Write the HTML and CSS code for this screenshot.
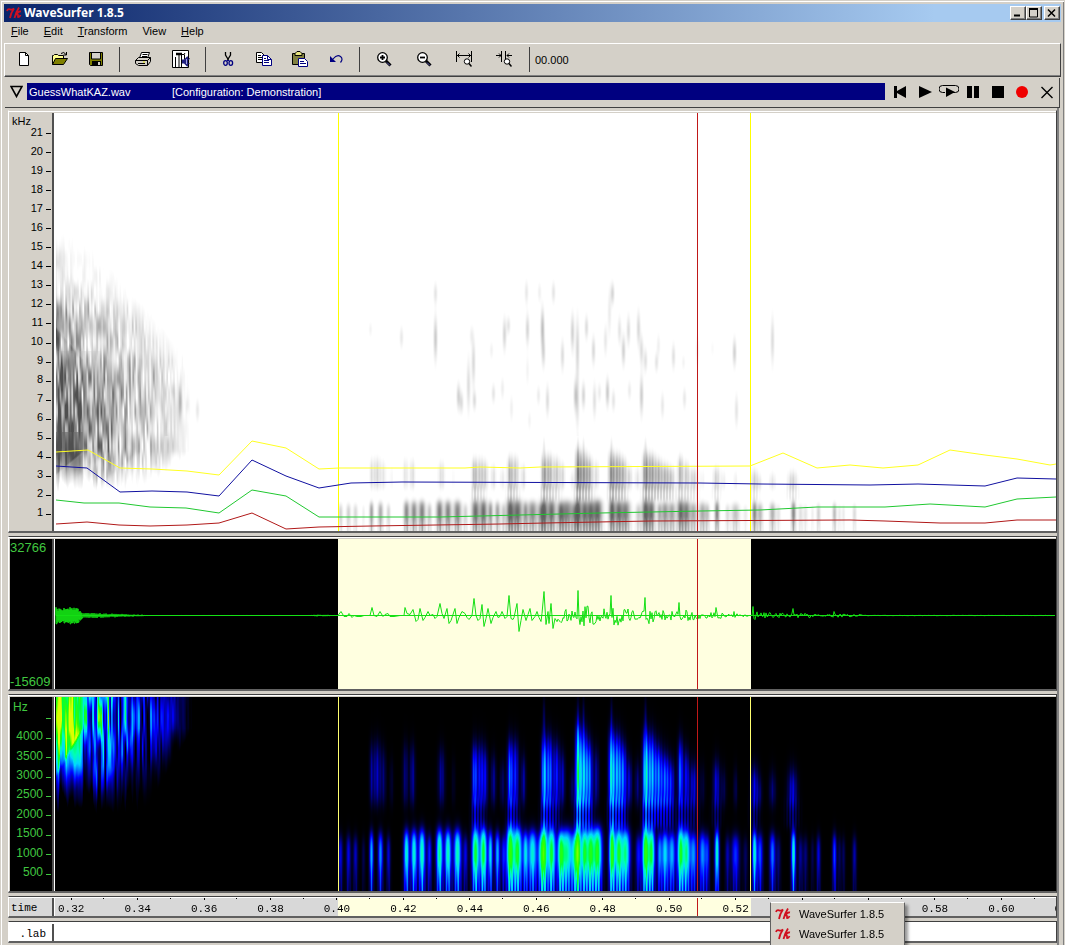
FILE: index.html
```html
<!DOCTYPE html>
<html lang="en">
<head>
<meta charset="utf-8">
<title>WaveSurfer 1.8.5</title>
<link rel="stylesheet" href="styles.css">
</head>
<body>
<svg class="defs" aria-hidden="true">
  <symbol id="tk" viewBox="0 0 16 12"><path d="M1 4Q2 1.500 4 2.300T8 1.500Q5 5.500 4 11M13 .5Q10 5 8.500 11M15 4.500Q12 4 10.500 7.500Q12.500 6.500 12 10Q13.500 10.500 14.500 8" fill="none" stroke="#d01020" stroke-width="1.800"/></symbol>
</svg>
<div class="window">
  <header class="titlebar">
    <svg class="tk"><use href="#tk"/></svg>
    <h1>WaveSurfer 1.8.5</h1>
    <button class="winbtn" aria-label="Minimize"><svg viewBox="0 0 12 10"><path d="M2 7.500h6" stroke="#000" stroke-width="2"/></svg></button>
    <button class="winbtn" aria-label="Maximize"><svg viewBox="0 0 12 10"><path d="M1.500 1v8h8v-8M1 1h9" fill="none" stroke="#000"/><path d="M1 1h9" stroke="#000" stroke-width="2"/></svg></button>
    <button class="winbtn close" aria-label="Close"><svg viewBox="0 0 12 10"><path d="M2 1.500l7 7M9 1.500l-7 7" stroke="#000" stroke-width="1.500"/></svg></button>
  </header>
  <nav class="menubar">
    <button><u>F</u>ile</button><button><u>E</u>dit</button><button><u>T</u>ransform</button><button>View</button><button><u>H</u>elp</button>
  </nav>
  <div class="toolbar">
    <div class="tools">
      <button aria-label="New"><svg viewBox="0 0 16 16"><path d="M3.500 1.500h6l3 3v10h-9z" fill="#fff" stroke="#000"/><path d="M9.500 1.500v3h3" fill="none" stroke="#000"/></svg></button>
      <button aria-label="Open"><svg viewBox="0 0 16 16"><path d="M.5 13.500v-9h1l1-1h3l1 1h5v3" fill="#ffff90" stroke="#000"/><path d="M.5 13.500l3-6h12l-4 6z" fill="#808000" stroke="#000"/><path d="M9 2.500q3-2.500 5 1M14.500 1v3h-3" fill="none" stroke="#000"/></svg></button>
      <button aria-label="Save"><svg viewBox="0 0 16 16"><path d="M1.500 1.500h13v13h-12l-1-1z" fill="#808000" stroke="#000"/><path d="M4 2h8v6h-8z" fill="#d4d0c8"/><path d="M3.500 2v6h9v-6" fill="none" stroke="#000"/><path d="M4 10h9v5h-9z"/><path d="M10 11h2v3h-2z" fill="#d4d0c8"/></svg></button>
    </div>
    <div class="tools wide">
      <button aria-label="Print"><svg viewBox="0 0 16 16"><path d="M4.500 7l2-5.500h8l-2 5.500z" fill="#fff" stroke="#000"/><path d="M7.500 3.500h5M7 5.500h5" stroke="#000"/><path d="M.5 9.500l3-3h12v4l-3 4h-9l-3-2z" fill="#d4d0c8" stroke="#000"/><path d="M.5 9.500h12l3-3M12.500 9.500v5M3 12.500h7" fill="none" stroke="#000"/><path d="M8 11h2" stroke="#e0e000"/></svg></button>
      <button aria-label="Preferences"><svg class="big" viewBox="0 0 18 18"><path d="M.5 .5h16v17h-16z" fill="#fff" stroke="#000"/><path d="M3.500 17v-10M7 17v-12M9.500 17v-12M12.500 4.500v5" fill="none" stroke="#000"/><path d="M4 4h6" stroke="#000" stroke-width="2.500"/><path d="M9 4.500h3l1-1.500" fill="none" stroke="#000"/><path d="M10 9.500h2l3-3h1v10h-1l-3-3h-2z" fill="#202080"/><path d="M14.500 9v5" stroke="#a0a0e0"/><path d="M17.500 8l-1 2M17.500 14l-1-1" stroke="#202080"/></svg></button>
    </div>
    <div class="tools">
      <button aria-label="Cut"><svg viewBox="0 0 16 16"><path d="M5.500 1v3l3 5M10.500 1v3l-3 5" fill="none" stroke="#000" stroke-width="1.300"/><path d="M8 9l-1 1M8 9l2 2" stroke="#000080"/><ellipse cx="5.500" cy="12" rx="1.800" ry="2.300" fill="none" stroke="#000080" stroke-width="1.300"/><ellipse cx="10.800" cy="12" rx="1.800" ry="2.300" fill="none" stroke="#000080" stroke-width="1.300"/></svg></button>
      <button aria-label="Copy"><svg viewBox="0 0 16 16"><path d="M.5 1.500h5l3 3v7h-8z" fill="#fff" stroke="#000"/><path d="M2 4.500h3M2 6.500h4M2 8.500h4" stroke="#000"/><path d="M6.500 4.500h5l4 4v6h-9z" fill="#fff" stroke="#000080"/><path d="M11.500 4.500v4h4M8 7.500h2M8 9.500h5M8 11.500h5" fill="none" stroke="#000080"/></svg></button>
      <button aria-label="Paste"><svg viewBox="0 0 16 16"><path d="M.5 2.500h12v11h-12z" fill="#808040" stroke="#000"/><path d="M3 4.500h7v-2l-2-2h-3l-2 2z" fill="#e8e480" stroke="#000"/><path d="M6.500 7.500h6l3 3v5h-9z" fill="#fff" stroke="#000080"/><path d="M8 10.500h4M8 12.500h6" stroke="#000080"/></svg></button>
      <button aria-label="Undo"><svg viewBox="0 0 16 16"><path d="M2 5v6h6z" fill="#000080"/><path d="M5 8q4-5 7.500-2.500q3 2.500 0 6" fill="none" stroke="#000080" stroke-width="1.200"/></svg></button>
    </div>
    <div class="tools widest">
      <button aria-label="Zoom in"><svg viewBox="0 0 16 16"><circle cx="6.500" cy="6.500" r="4.800" fill="#fff" stroke="#000" stroke-width="1.300"/><path d="M6.500 4v5M4 6.500h5" stroke="#000" stroke-width="1.800"/><path d="M10 10l4.500 4.500" stroke="#000" stroke-width="3"/><path d="M11 11.500l3 3" stroke="#6060c0"/></svg></button>
      <button aria-label="Zoom out"><svg viewBox="0 0 16 16"><circle cx="6.500" cy="6.500" r="4.800" fill="#fff" stroke="#000" stroke-width="1.300"/><path d="M4 6.500h5" stroke="#000" stroke-width="1.800"/><path d="M10 10l4.500 4.500" stroke="#000" stroke-width="3"/><path d="M11 11.500l3 3" stroke="#6060c0"/></svg></button>
      <button aria-label="Zoom to selection"><svg viewBox="0 0 16 16"><path d="M.5 0v11M15.500 0v11M1 4.500h14M3.500 2.500l-2 2l2 2M12.500 2.500l2 2l-2 2" fill="none" stroke="#000"/><circle cx="11" cy="10.500" r="2.700" fill="#fff" stroke="#000"/><path d="M13 12.500l2.500 3" stroke="#000" stroke-width="1.500"/></svg></button>
      <button aria-label="Zoom out full"><svg viewBox="0 0 16 16"><path d="M5.500 0v11M9.500 0v11M0 4.500h5M16 4.500h-5M3 2.500l2 2l-2 2M13 2.500l-2 2l2 2" fill="none" stroke="#000"/><circle cx="11" cy="10.500" r="2.700" fill="#fff" stroke="#000"/><path d="M13 12.500l2.500 3" stroke="#000" stroke-width="1.500"/></svg></button>
    </div>
    <output class="clock">00.000</output>
  </div>

  <div class="sound-head">
    <button class="fold" aria-label="Sound menu"><svg viewBox="0 0 13 13"><path d="M1 1.500h11l-5.500 10z" fill="none" stroke="#000" stroke-width="1.600"/></svg></button>
    <div class="sound-name"><span class="file">GuessWhatKAZ.wav</span><span>[Configuration: Demonstration]</span></div>
    <div class="transport">
      <button aria-label="To start"><svg viewBox="0 0 20 14"><path d="M4 1h3v5l9-5v12l-9-5v5h-3z"/></svg></button>
      <button aria-label="Play"><svg viewBox="0 0 20 14"><path d="M4 1l13 6l-13 6z"/></svg></button>
      <button aria-label="Play loop"><svg viewBox="0 0 20 14"><path d="M6 7.500h-2.500a3 3 0 0 1 0-7h13a3 3 0 0 1 0 7h-3" fill="none" stroke="#000"/><path d="M7 2.500l9 4.500l-9 5z"/></svg></button>
      <button aria-label="Pause"><svg viewBox="0 0 20 14"><path d="M4 1h5v12h-5zM11 1h5v12h-5z"/></svg></button>
      <button aria-label="Stop"><svg viewBox="0 0 20 14"><path d="M4 1h12v12h-12z"/></svg></button>
      <button aria-label="Record"><svg viewBox="0 0 20 14"><circle cx="10" cy="7" r="6" fill="#f00000"/></svg></button>
      <button aria-label="Close sound"><svg viewBox="0 0 20 14"><path d="M4.500 2l11 11M15.500 2l-11 11" stroke="#000" stroke-width="1.400"/></svg></button>
    </div>
  </div>

  <main class="panes">
    <section class="pane wideband">
      <div class="axis">
        <span class="unit">kHz</span>
        <ol class="scale"><li>21</li><li>20</li><li>19</li><li>18</li><li>17</li><li>16</li><li>15</li><li>14</li><li>13</li><li>12</li><li>11</li><li>10</li><li>9</li><li>8</li><li>7</li><li>6</li><li>5</li><li>4</li><li>3</li><li>2</li><li>1</li></ol>
      </div>
      <div class="plot">
        <canvas id="grey" width="1001" height="418"></canvas>
        <i class="edge start"></i><i class="edge end"></i>
        <svg class="layer" viewBox="55 113 1001 418" preserveAspectRatio="none">
          <polyline class="f4" points="56,452 88,450 120,468 152,469 187,471 219,475 252,441 286,448 319,469 339,468 465,468 480,467 520,468 540,467 750,466 783,453 817,468 850,465 883,468 918,465 950,450 985,455 1017,459 1050,465 1056,464"/>
          <polyline class="f3" points="56,466 87,468 120,492 152,491 187,492 219,496 252,460 286,476 319,488 351,483 402,482 700,483 760,484 870,485 918,484 985,486 1017,478 1056,479"/>
          <polyline class="f2" points="56,500 84,503 119,503 150,507 186,508 219,513 252,490 286,496 319,517 440,517 520,515 600,513 700,511 760,510 817,507 885,507 930,504 985,507 1017,499 1056,497"/>
          <polyline class="f1" points="56,524 87,522 119,525 150,526 187,525 219,523 252,513 286,529 319,527 371,526 500,524 545,523 650,521 850,520 885,521 940,523 985,523 1017,520 1056,520"/>
        </svg>
        <i class="cursor"></i>
      </div>
    </section>

    <section class="pane waveform dark">
      <div class="axis"><span>32766</span><span>-15609</span></div>
      <div class="plot">
        <i class="selection"></i>
        <svg class="layer" viewBox="55 540 1001 150" preserveAspectRatio="none"><path id="wave"/></svg>
        <i class="cursor"></i>
      </div>
    </section>

    <section class="pane narrow dark">
      <div class="axis">
        <span class="unit">Hz</span>
        <ol class="scale"><li></li><li>4000</li><li>3500</li><li>3000</li><li>2500</li><li>2000</li><li>1500</li><li>1000</li><li>500</li></ol>
      </div>
      <div class="plot">
        <canvas id="colour" width="1001" height="194"></canvas>
        <i class="edge pale start"></i><i class="edge pale end"></i>
        <i class="cursor"></i>
      </div>
    </section>

    <section class="pane time">
      <div class="axis"><span>time</span></div>
      <div class="plot">
        <i class="selection"></i>
        <ol class="ruler"><li>0.32</li><li>0.34</li><li>0.36</li><li>0.38</li><li>0.40</li><li>0.42</li><li>0.44</li><li>0.46</li><li>0.48</li><li>0.50</li><li>0.52</li><li>0.54</li><li>0.56</li><li>0.58</li><li>0.60</li><li>0.62</li></ol>
        <i class="cursor"></i>
      </div>
    </section>

    <section class="pane labels">
      <div class="axis"><span>.lab</span></div>
      <div class="plot"></div>
    </section>
  </main>

  <div class="popup">
    <button><svg class="tk"><use href="#tk"/></svg>WaveSurfer 1.8.5</button>
    <button><svg class="tk"><use href="#tk"/></svg>WaveSurfer 1.8.5</button>
  </div>
</div>
<script src="plots.js"></script>
</body>
</html>
```
FILE: styles.css
```css
* { box-sizing: border-box; }
body {
  margin: 0;
  font: 11px/14px "Liberation Sans", Arial, sans-serif;
  color: #000;
  background: #d4d0c8;
}
button { font: inherit; color: inherit; background: none; border: 0; padding: 0; margin: 0; }
ol { list-style: none; margin: 0; padding: 0; }
.defs { position: absolute; width: 0; height: 0; }
.tk { width: 16px; height: 12px; flex: none; }

.window {
  position: relative;
  display: flex;
  flex-direction: column;
  min-height: 100vh;
  padding: 2px 2px 0;
  overflow: hidden;
  border: 1px solid #d4d0c8;
  border-width: 1px 1px 0;
  box-shadow: inset 1px 1px #fff, inset -1px 0 #808080;
}

.titlebar {
  display: flex;
  align-items: center;
  height: 18px;
  margin: 1px 1px 0 1px;
  padding: 0 1px 0 2px;
  background: linear-gradient(to right, #0a246a, #a6caf0 88%);
}
.titlebar h1 { flex: 1; margin: 0 0 0 2px; font: bold 12px/18px "Noto Sans", sans-serif; color: #fff; }
.winbtn {
  width: 16px;
  height: 14px;
  background: #d4d0c8;
  border: 1px solid;
  border-color: #fff #404040 #404040 #fff;
  box-shadow: inset -1px -1px #808080;
}
.winbtn svg { display: block; width: 12px; height: 10px; margin: 1px; }
.winbtn.close { margin-left: 2px; }

.menubar { display: flex; align-items: flex-start; height: 21px; padding-left: 8px; gap: 15px; line-height: 19px; }

.toolbar {
  display: flex;
  align-items: center;
  height: 34px;
  margin: 0 1px;
  padding: 0 0 2px 1px;
  border: 1px solid;
  border-color: #fff #404040 #404040 #fff;
  box-shadow: inset 0 -1px #808080;
}
.tools { display: flex; height: 25px; margin-right: 5px; }
.tools button { width: 36px; display: flex; align-items: center; justify-content: center; }
.tools.wide button { width: 38px; }
.tools.widest button { width: 40px; }
.tools svg { width: 16px; height: 16px; }
.tools svg.big { width: 18px; height: 18px; }
.tools + .tools, .clock { border-left: 1px solid #404040; padding-left: 4px; }
.clock { height: 25px; line-height: 27px; padding-left: 5px; }

.sound-head {
  display: flex;
  align-items: center;
  height: 30px;
  margin: 1px 2px 0 2px;
  padding: 0 0 2px 1px;
  border: solid #404040;
  border-width: 0 1px 1px 0;
}
.fold { width: 21px; height: 13px; padding-left: 4px; }
.fold svg { display: block; width: 13px; height: 13px; }
.sound-name {
  flex: 1;
  display: flex;
  height: 17px;
  padding-left: 2px;
  line-height: 18px;
  color: #fff;
  background: #000080;
}
.sound-name .file { width: 143px; }
.transport { display: flex; width: 174px; padding-left: 3px; }
.transport button { flex: 1; display: flex; justify-content: center; }
.transport svg { width: 20px; height: 14px; }

.panes {
  flex: 1;
  display: flex;
  flex-direction: column;
  gap: 3px;
  margin: 0 3px 0 5px;
  padding-top: 2px;
  padding-bottom: 2px;
  border-right: 2px solid #808080;
}
.pane {
  position: relative;
  display: grid;
  grid-template-columns: 44px minmax(0, 1fr);
  border: solid;
  border-width: 1px 1px 2px;
  border-color: #404040 #404040 #606060 #fff;
  box-shadow: inset 0 1px #fff;
  padding: 2px 0 0 1px;
  min-height: 0;
}
.wideband { flex: 1 0 auto; height: 423px; border-top-color: #d4d0c8; }
.waveform { height: 155px; }
.narrow { height: 199px; }
.time { height: 22px; padding-top: 1px; }
.labels { height: 22px; background: #fff; }
.axis { display: flex; flex-direction: column; border-right: 2px solid #505050; box-shadow: 1px 0 #fff; }
.dark .axis { background: #000; color: #40c840; font-size: 12px; }
.plot { position: relative; overflow: hidden; margin-left: 1px; background: #fff; }
.dark .plot { background: #000; }

.wideband .unit { height: 10px; line-height: 17px; padding-left: 2px; }
.scale { flex: 1; display: grid; grid-auto-rows: minmax(0, 1fr); }
.scale li { display: flex; align-items: center; justify-content: flex-end; line-height: 12px; padding-bottom: 2px; }
.scale li::after { content: ""; width: 5px; height: 1px; margin: 4px 1px 0 3px; background: currentColor; }
.wideband .scale, .narrow .scale { padding-bottom: 8px; }
.waveform .axis { justify-content: space-between; padding-top: 2px; font-size: 13px; }
.narrow .unit { height: 11px; line-height: 21px; padding-left: 3px; }

canvas, .layer { position: absolute; inset: 0; width: 100%; height: 100%; }
.layer polyline, .layer path { fill: none; stroke-width: 1; vector-effect: non-scaling-stroke; }
.layer .f4 { stroke: #ffff20; }
.layer .f3 { stroke: #1010a0; }
.layer .f2 { stroke: #20c830; }
.layer .f1 { stroke: #b01818; }
.layer #wave { stroke: #14e014; }
.selection { position: absolute; inset: 0 auto 0 28.3%; width: 41.2%; background: #ffffe0; }
.edge, .cursor { position: absolute; top: 0; bottom: 0; width: 1px; background: #ffff00; }
.edge.pale { background: #ffff70; }
.start { left: 28.3%; }
.end { left: 69.4%; }
.cursor { left: 64.1%; background: #c01818; }

.time .axis, .labels .axis { padding: 3px 0 0 1px; font: 11px/14px "Liberation Mono", monospace; }
.time .axis, .time .plot { background: #d8d8d8; }
.labels .axis { padding-right: 6px; text-align: right; }
.ruler {
  position: relative;
  display: flex;
  margin: 0 -45px 0 -17px;
  font: 11px/14px "Liberation Mono", monospace;
}
.ruler li {
  flex: 1;
  padding-top: 4px;
  text-align: center;
  background: linear-gradient(#000, #000) 50% 0 / 1px 2px no-repeat, linear-gradient(#000, #000) 100% 0 / 1px 1px no-repeat;
}

.popup {
  position: absolute;
  right: 159px;
  bottom: 0;
  width: 135px;
  height: 43px;
  padding-top: 1px;
  background: #d4d0c8;
  border: solid;
  border-width: 1px 1px 0;
  border-color: #fff #606060;
  box-shadow: 3px 3px 3px #0006;
}
.popup button { display: flex; align-items: center; gap: 8px; height: 20px; padding-left: 4px; }
```
FILE: plots.js
```js
// Low-band energy (0 - 1.6 kHz): x, half width, level
const low = [[340,2,.25],[348,2,.26],[355,2,.22],[363,1.5,.1],[371,1.8,.5],[380,2.2,.45],[388,1.8,.24],
[406,2.4,.62],[413.5,2.6,.62],[421.500,2.8,.66],[429,2,.32],[439,2.8,.7],[447.500,2.8,.66],[457,3.2,.66],[465,2,.26],
[475,3.2,.78],[483,3,.78],[490,2,.55],[497,2.2,.5],[503,2,.3],[509.500,3,.86],[517,4,.8],[525,2,.5],[532,4,.62],[540,2.500,.4],
[543.500,2.800,.86],[551,3.500,.78],[560,2.500,.5],[566,6,.7],[574,2.500,.35],[577.500,2.600,.9],[584,3,.76],[590,3,.72],[597,4,.82],
[611.500,2.600,.88],[618,3,.72],[625,4,.7],[638,2.500,.3],[645,2.800,.86],[651,3,.76],[659,2,.42],[664.500,3,.56],[671.500,3,.5],
[680,2.800,.78],[686,3,.68],[693,3,.46],[702,3,.46],[707,2,.3],[716.500,2,.64],[727,2,.2],[735,3.500,.34],[745,2,.12],
[754,2,.62],[759.500,2.500,.38],[772,2.500,.42],[778,2,.15],[793,2,.62],[800,2,.18],[805,2,.15],[812,1.500,.1],[818,1.800,.25],
[834,1.800,.36],[839,1.500,.12],[843,1.500,.12],[854,1.800,.2]];

// High-band energy: x, half width, level, upper limit in Hz
const high = [[371,1.5,.18,3950],[376.500,3,.25,4000],[383,2,.15,3800],[391,1.5,.08,3500],[405,2,.18,3950],[412,2,.22,3900],[441,2.500,.22,3800],
[453,1.5,.06,3500],[474,2,.44,3950],[480,3,.34,3950],[485,2,.25,3800],[493,2,.22,3600],[502,2,.16,3400],[509.500,2,.5,4050],[515,2.500,.36,4050],
[523,1.8,.24,3600],[543.500,2,.62,4150],[549,2.500,.5,4150],[556,2.500,.36,4000],[562,2,.26,3700],[572,2,.16,3200],[577.500,2,.78,4450],
[583,3,.64,4300],[589,2.500,.48,4000],[596,2,.22,3800],[611,2.200,.7,4300],[617,3,.58,4200],[623,2.500,.44,3950],[629,2,.28,3500],[637,2,.2,3400],
[645,2.200,.7,4300],[651,3,.58,4200],[658,3,.48,3900],[665,3,.46,3650],[671,2.500,.36,3450],[680,2,.5,4050],[686,2,.34,3750],[693,3,.32,3400],
[702,2,.1,3300],[716,2.500,.32,3450],[723,2,.15,3200],[735,1.500,.15,3200],[754,2.500,.34,3300],[759,2,.22,3000],[772,2.500,.22,3100],[792,3.500,.34,3200]];

// Weak patches above 5 kHz: x, y on the wide spectrogram, half height, level
const patches = [[435,293,10,.16],[435,338,20,.3],[401,337,10,.14],[370,329,7,.08],[458,396,12,.26],[461,402,10,.2],[468,385,24,.2],
[473,362,22,.22],[471,335,9,.1],[474,400,9,.2],[493,393,9,.16],[491,350,8,.09],[502,388,10,.11],[504,334,15,.24],[508,325,8,.16],
[527,329,14,.24],[526,292,11,.14],[539,292,9,.1],[542,328,18,.36],[543,352,14,.22],[547,400,14,.2],[538,395,9,.12],[553,292,10,.16],
[562,355,14,.2],[572,332,17,.26],[577,348,28,.24],[575,395,14,.28],[577,402,25,.18],[583,395,12,.24],[586,327,11,.2],[593,350,13,.22],
[594,400,16,.18],[599,392,9,.12],[605,340,14,.14],[607,392,13,.3],[609,312,22,.12],[612,293,10,.24],[613,400,10,.16],[619,330,13,.16],
[623,350,14,.26],[628,330,14,.2],[629,390,9,.12],[638,328,16,.22],[641,350,14,.2],[641,395,18,.28],[645,360,11,.18],[656,362,9,.16],
[658,345,11,.1],[662,405,12,.14],[673,356,12,.18],[684,398,10,.14],[683,362,7,.08],[697,350,15,.1],[734,352,13,.26],[736,410,15,.16],
[712,348,8,.05],[772,340,22,.2],[527,370,14,.08],[529,420,9,.08],[511,408,12,.1],
[154,375,14,.24],[161,400,16,.24],[166,425,12,.18],[172,390,8,.16],[180,400,16,.36],[187,405,8,.1],[197,410,10,.14]];

function hash(i, j) {
  const s = Math.sin(i * 127.1 + j * 311.7) * 43758.5453;
  return s - Math.floor(s);
}
function noise(x, y) {
  const i = Math.floor(x), j = Math.floor(y);
  let u = x - i, v = y - j;
  u = u * u * (3 - 2 * u);
  v = v * v * (3 - 2 * v);
  return (hash(i, j) * (1 - u) + hash(i + 1, j) * u) * (1 - v) + (hash(i, j + 1) * (1 - u) + hash(i + 1, j + 1) * u) * v;
}
function lerp(table, x) {
  if (x <= table[0][0]) return table[0][1];
  for (let i = 1; i < table.length; i++) {
    if (x < table[i][0]) {
      const [a, p] = table[i - 1], [b, q] = table[i];
      return p + (q - p) * (x - a) / (b - a);
    }
  }
  return table[table.length - 1][1];
}
const step = (x, edge, soft) => 1 / (1 + Math.exp((edge - x) / soft));
const bell = d => Math.exp(-d * d);

// Burst at the left edge
const reach = [[56,.95],[81,.92],[84,.68],[104,.6],[110,.48],[136,.42],[142,.32],[168,.2],[180,.1],[192,0]];
const spread = [[2400,0],[2850,.3],[3500,.82],[4200,1],[5500,.92],[8200,.88],[9300,.55],[10500,.72],[11800,.66],[12600,.4],[14500,.3],[16000,0]];
function burst(x, f) {
  if (x > 192) return 0;
  const over = Math.max(0, f - 9000) / 1000;
  const near = lerp(reach, x + over * 16 + Math.max(0, 4200 - f) / 45);
  const jag = (noise(x / 2.4, 5) - .5) * 900;
  const streak = noise(x / 1.7 + f / 9000 + 40, f / 900) * .7 + noise(x / 4.7, f / 1600 + 20) * .3;
  const solid = x < 83 && f < 5200;
  const depth = solid ? .45 : x > 100 || f > 9500 ? 1.5 : 1.15;
  return Math.max(0, near * lerp(spread, f + jag) * (1 + depth * (streak * 1.7 - .92)));
}
function voiced(x, f) {
  let e = 0;
  const comb = .86 + .14 * Math.cos(x * 2.1);
  if (f < 2400) {
    for (const [c, w, a] of low) {
      const d = (x - c) / (w * 1.15);
      if (Math.abs(d) < 2.6) e += a * 1.06 * bell(d) * step(1280 + a * 420, f, 110) * (.72 + .28 * bell((f - 1000) / 650));
    }
    e *= f < 800 ? 1 - (1 - comb) * (1 - f / 800) * 2 : 1;
    e = e > .85 ? .85 + (e - .85) * .35 : e;
  }
  for (const [c, w, a, top] of high) {
    const d = (x - c) / (w * 1.3);
    if (Math.abs(d) > 2.6) continue;
    e += a * bell(d) * step(f, 2250, 120) * step(top - 200, f, 170) * (.65 + .35 * bell((f - 3000) / 800)) * comb;
    if (a > .28) e += a * .4 * bell(d / 1.3) * (x % 3 < 1.5 ? 1 : .25) * step(f, 1650, 60) * step(2400, f, 80);
    if (a > .6) e += .13 * bell((x - c) / 1.2) * step(f, 4000, 100) * step(4800, f, 160);
  }
  return e;
}
function draw(id, range, colour, extra) {
  const canvas = document.getElementById(id), ctx = canvas.getContext('2d');
  const { width, height } = canvas, img = ctx.createImageData(width, height);
  for (let px = 0; px < width; px++) {
    for (let py = 0; py < height; py++) {
      const x = px + 55, f = (height - py) / height * range;
      let e = px < 1 ? 0 : burst(x, f);
      if (x > 338 && x < 870 && f < 5200) e += voiced(x, f);
      if (extra && f > 5000) e += extra(x, py + 113);
      const c = colour(Math.min(1, e)), k = (py * width + px) * 4;
      img.data[k] = c[0]; img.data[k + 1] = c[1]; img.data[k + 2] = c[2]; img.data[k + 3] = 255;
    }
  }
  ctx.putImageData(img, 0, 0);
}
const stops = [[0,0,0,0],[.12,0,0,90],[.3,0,0,255],[.45,0,120,255],[.58,0,215,255],[.7,0,255,180],[.8,0,255,60],[.9,50,255,0],[1,220,255,0]];
function heat(e) {
  for (let i = 1; i < stops.length; i++) {
    if (e <= stops[i][0]) {
      const a = stops[i - 1], b = stops[i], t = (e - a[0]) / (b[0] - a[0]);
      return [1, 2, 3].map(k => a[k] + (b[k] - a[k]) * t);
    }
  }
}
function ink(e) {
  const v = 255 - 180 * Math.max(0, e - .02);
  return [v, v, v];
}
draw('grey', 21950, ink, (x, y) => {
  let e = 0;
  for (const [c, m, h, a] of patches) if (Math.abs(x - c) < 5) e += a * bell((x - c) / 1.9) * bell((y - m) / h);
  return e;
});
draw('colour', 5000, heat);

// Waveform: x and offset from the zero line
const shape = [[338,0],[341,-4],[344,1],[347,1],[349,-2],[352,2],[354,0],[357,1],[361,1],[364,0],[370,0],[372,-8],[374,0],[377,1],[380,-4],[383,1],[385,-1],[388,-2],[390,1],[394,1],[400,0],[404,0],
[405,-8],[407,-2],[410,-1],[413,-6],[416,6],[418,4],[420,-7],[423,5],[425,2],[428,-4],[430,0],[433,-1],[435,3],[437,1],[440,-12],[442,-2],[444,3],[447,-7],[449,8],[451,5],[455,-7],[457,8],[459,2],[462,-4],[465,-2],[467,2],[469,4],[472,0],
[474,-17],[476,0],[478,5],[480,3],[482,-11],[484,11],[486,3],[488,-7],[491,8],[493,2],[496,-4],[498,2],[500,1],[502,-4],[505,3],[507,1],[509,-20],[511,3],[513,4],[514,2],[517,-12],[519,16],[521,5],[523,-6],[526,5],[528,-1],[530,-7],[532,5],[535,1],[537,-4],[539,2],[541,6],[542,-2],
[544,-24],[546,9],[548,-4],[549,8],[551,-12],[553,13],[555,3]];
const swell = [[56,8],[61,7],[63,5],[66,9],[72,9],[78,7],[83,3],[100,2.2],[125,1.4],[142,.8],[148,.1],[310,.1],[316,.9],[330,.6],[337,.1],
[556,8],[572,5],[576,5],[584,12],[600,8],[609,4],[614,10],[628,6],[640,3],[648,10],[660,5],[676,4],[684,6],[700,3],[715,3],[730,2],[750,1],
[753,4],[765,3],[790,2],[797,3],[815,1.6],[824,.4],[835,2],[860,.8],[864,.2],[1055,.1]];
const pulses = { 578: -25, 611: -20, 645: -18, 679: -13, 716: -8, 734: -4, 753: -9, 793: -7, 834: -4 };
let d = 'M56 616.5';
for (let x = 57; x < 338; x++) {
  const a = lerp(swell, x) * (.6 + .5 * hash(x, 3));
  d += x < 84 ? `V${616.5 - a}V${616.5 + a}H${x}` : `L${x} ${616.5 + a * (x % 2 ? 1 : -1)}`;
}
for (const [x, y] of shape) d += `L${x} ${616.5 + y}`;
for (let x = 556; x <= 1055; x++) {
  const a = lerp(swell, x) * 1.1;
  d += `L${x} ${616.5 + (pulses[x] || a * (hash(x, 7) * 2 - 1))}`;
}
document.getElementById('wave').setAttribute('d', d + 'M56 616.5H1055');
```
